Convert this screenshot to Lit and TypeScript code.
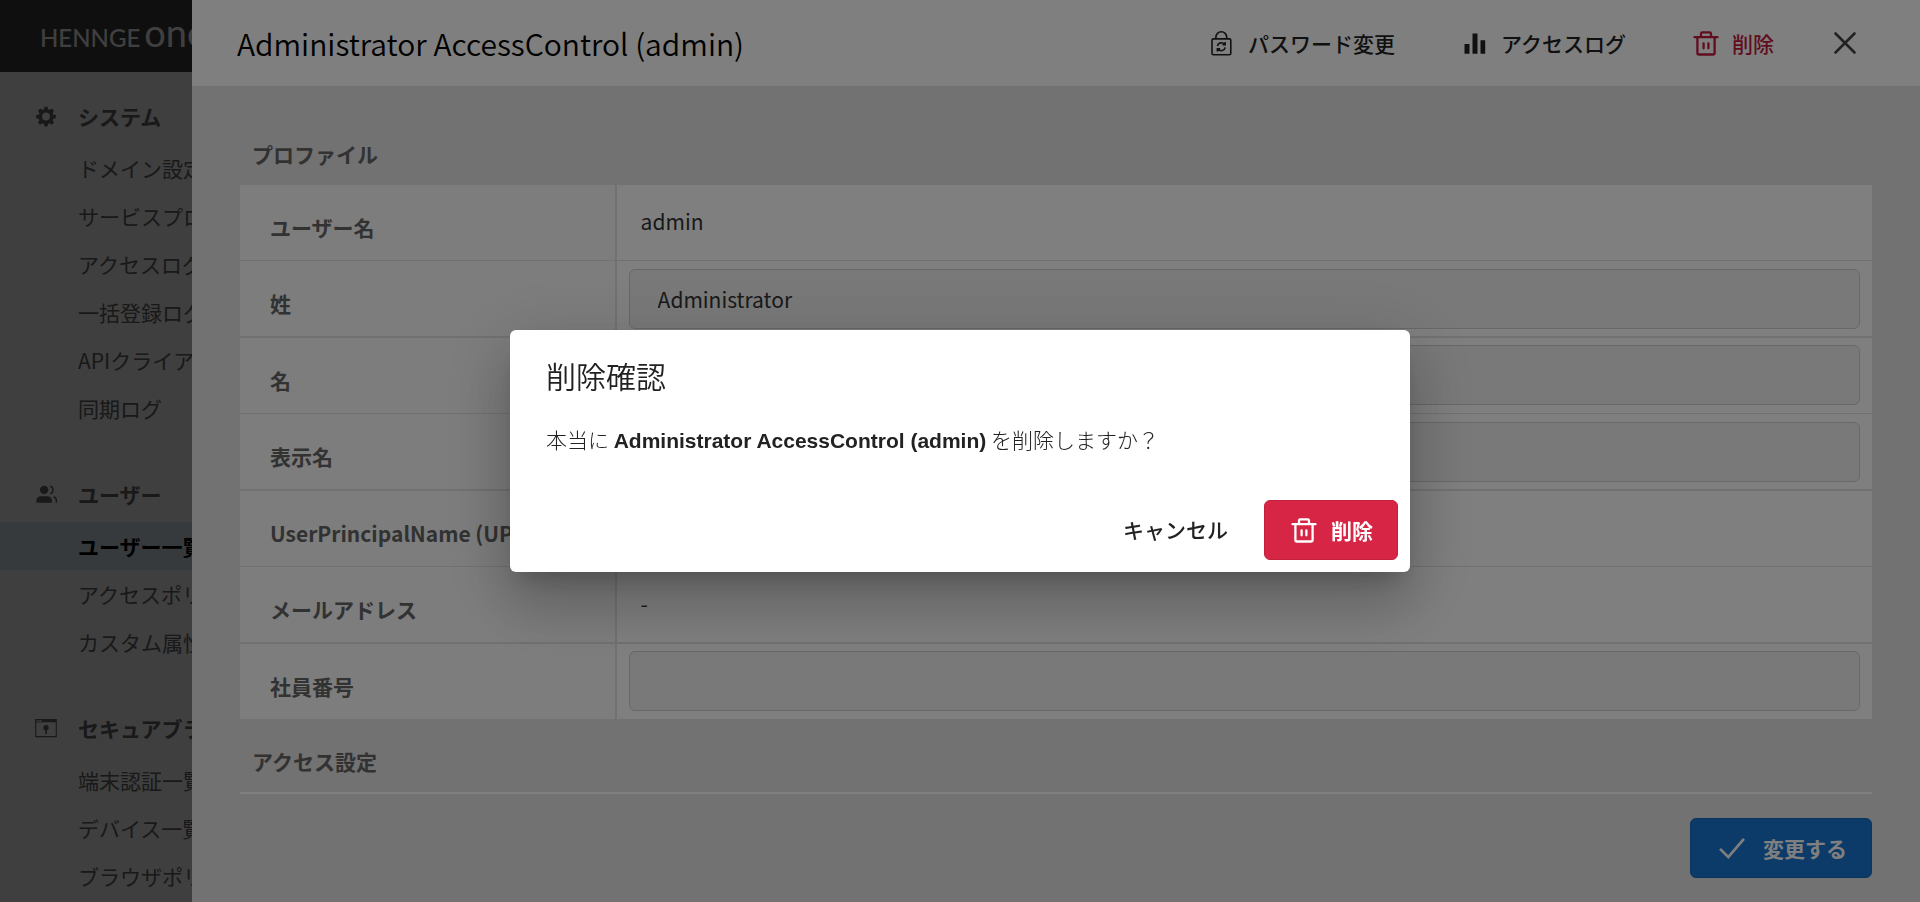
import { LitElement, html, css, svg, nothing } from "lit";
import { customElement, property } from "lit/decorators.js";

const glyphs: Record<string, unknown> = {
  gear: svg`<path fill="currentColor" fill-rule="evenodd" d="M10.3 2h3.4l.5 2.7 1.9.8 2.3-1.6 2.4 2.4-1.6 2.3.8 1.9 2.7.5v3.4l-2.7.5-.8 1.9 1.6 2.3-2.4 2.4-2.3-1.6-1.9.8-.5 2.7h-3.4l-.5-2.7-1.9-.8-2.3 1.6-2.4-2.4 1.6-2.3-.8-1.9-2.7-.5v-3.4l2.7-.5.8-1.9-1.6-2.3 2.4-2.4 2.3 1.6 1.9-.8zM12 8.200a4.300 4.300 0 1 0 0 8.600 4.300 4.300 0 0 0 0-8.600z"/>`,
  users: svg`<circle cx="10" cy="7.500" r="4.600" fill="currentColor"/><path fill="currentColor" d="M1.500 21.500v-2.200c0-3 2.500-4.800 5-4.800h7c2.600 0 5 1.800 5 4.800v2.200z"/><path fill="none" stroke="currentColor" stroke-width="1.600" d="M16.500 3.600c1.800.4 3.200 2 3.200 4s-1.400 3.600-3.200 4M20.500 15c1.600.6 2.800 2.200 2.800 4v2.500"/>`,
  browser: svg`<path fill="none" stroke="currentColor" stroke-width="1.200" d="M.8 2.800h22.400v18.600H.8z"/><path fill="currentColor" d="M7.500 2.500h15.700v3.300H7.500zM.8 5.200h7v.7h-7z"/><path stroke="currentColor" stroke-width="1" stroke-dasharray="1.200 1.200" d="M1.500 3.900h6"/><circle cx="12" cy="11.700" r="2.900" fill="currentColor"/><path fill="currentColor" d="M11.100 13h1.800v5.200l-.9.900-.9-.9z"/>`,
  lock: svg`<g fill="none" stroke="currentColor" stroke-width="1.600"><rect x="2" y="7.900" width="18.800" height="15.800" rx="1.400"/><path d="M5.900 7.700V6.200a5.400 5.400 0 0 1 10.800 0v1.500"/><path d="M7.400 15a4 4 0 0 1 7.100-1.700M15.200 16.400a4 4 0 0 1-7.100 1.700M15.200 10.900v2.700h-2.700M7.400 20.500v-2.700h2.700"/></g>`,
  bars: svg`<path fill="currentColor" d="M1.500 13h5v9.800h-5zM9.500 2.500h5v20.300h-5zM17.500 9.300h4.700v13.500h-4.700z"/>`,
  trash: svg`<g fill="none" stroke="currentColor" stroke-width="2.300"><path d="M.5 6.200h23" stroke-linecap="round"/><path d="M3.400 6.500v15.700a1.300 1.300 0 0 0 1.300 1.300h14.600a1.300 1.300 0 0 0 1.300-1.300V6.500"/><path d="M7 6V2.700A1.300 1.300 0 0 1 8.300 1.400h7.400A1.300 1.300 0 0 1 17 2.700V6"/><path d="M9.600 12.300v5M14.400 12.300v5" stroke-linecap="round"/></g>`,
  close: svg`<path fill="none" stroke="currentColor" stroke-width="2.600" stroke-linecap="round" d="M2.500 2.500l19 19M21.500 2.500l-19 19"/>`,
  check: svg`<path fill="none" stroke="currentColor" stroke-width="2.500" d="M1 12.800l7.600 7.600L23 3.600"/>`,
};

@customElement("ui-icon")
class UiIcon extends LitElement {
  static styles = css`
    :host { display: inline-flex; flex: none; width: 24px; height: 24px; }
    svg { width: 100%; height: 100%; display: block; overflow: visible; }
  `;
  @property() name = "";
  render() {
    return html`<svg viewBox="0 0 24 24" aria-hidden="true">${glyphs[this.name] ?? nothing}</svg>`;
  }
}

interface Group { icon: string; title: string; items: string[]; }

@customElement("side-nav")
class SideNav extends LitElement {
  static styles = css`
    :host { display: block; height: 100vh; overflow: hidden; background: #fcfcfc; color: #646464; }
    .brand { height: 72px; box-sizing: border-box; padding: 14px 0 0 40px; background: #3c3c3c; color: #fff;
      display: flex; align-items: baseline; gap: 4px; font-family: Lato, sans-serif; line-height: 36px; white-space: nowrap; }
    .word { font-size: 24px; font-weight: 500; }
    .one { font-size: 38px; }
    nav { padding-top: 18px; white-space: nowrap; }
    .group { margin-bottom: 36px; }
    h2 { margin: 0; height: 54px; box-sizing: border-box; padding: 0 0 2px 35px; display: flex; align-items: center; gap: 21px;
      font-size: 21px; line-height: 30px; font-weight: 700; }
    h2 ui-icon { width: 22px; height: 22px; }
    ul { list-style: none; margin: 0; padding: 0; }
    a { display: block; padding: 9px 0 9px 78px; font-size: 21px; line-height: 30px; color: inherit; text-decoration: none; }
    .active { background: #d9e9f5; color: #000; font-weight: 700; }
  `;
  groups: Group[] = [
    { icon: "gear", title: "システム", items: ["ドメイン設定", "サービスプロバイダ", "アクセスログ", "一括登録ログ", "APIクライアント", "同期ログ"] },
    { icon: "users", title: "ユーザー", items: ["ユーザー一覧", "アクセスポリシー", "カスタム属性"] },
    { icon: "browser", title: "セキュアブラウザ", items: ["端末認証一覧", "デバイス一覧", "ブラウザポリシー"] },
  ];
  render() {
    return html`
      <div class="brand"><span class="word">HENNGE</span><span class="one">one</span></div>
      <nav>
        ${this.groups.map((g) => html`
          <div class="group">
            <h2><ui-icon name=${g.icon}></ui-icon>${g.title}</h2>
            <ul>${g.items.map((i) => html`<li><a href="#" class=${i === "ユーザー一覧" ? "active" : ""}>${i}</a></li>`)}</ul>
          </div>`)}
      </nav>`;
  }
}

interface Field { label: string; value: string; edit?: boolean; }

@customElement("user-drawer")
class UserDrawer extends LitElement {
  static styles = css`
    :host { display: flex; flex-direction: column; height: 100vh; background: #e5e5e5; color: #333; }
    header { flex: none; height: 86px; box-sizing: border-box; padding: 0 63px 0 45px; background: #fff;
      display: flex; align-items: center; gap: 59px; }
    h1 { margin: 0; flex: 1; font-size: 30px; line-height: 44px; font-weight: 350; color: #000; white-space: nowrap; }
    button { font: inherit; border: 0; background: none; padding: 0; display: flex; align-items: center; cursor: pointer; }
    .actions { display: flex; align-items: center; gap: 68px; }
    .action { gap: 14px; font-size: 21px; line-height: 30px; font-weight: 500; color: #222; }
    .danger { color: #c31a3c; }
    .close { color: #444; }
    main { flex: 1; min-height: 0; overflow: hidden; padding: 26px 48px 0; }
    h2 { margin: 0; padding: 27px 12px 16px; font-size: 21px; line-height: 30px; font-weight: 700; color: #646464; }
    .panel { background: #fff; min-height: 75px; }
    .row { display: grid; grid-template-columns: 3fr 10fr; min-height: 75px; border-bottom: 1px solid #e3e3e3; }
    .row:nth-child(even) { border-bottom-width: 2px; }
    .row:last-child { border-bottom: 0; }
    .label { background: #fafafa; border-right: 2px solid #e3e3e3; padding: 27px 30px 18px; font-size: 21px; line-height: 30px;
      font-weight: 700; color: #646464; white-space: nowrap; }
    .value { padding: 21px 24px; font-size: 21px; line-height: 30px; }
    .edit { padding: 7px 12px 8px; }
    .row:nth-child(even) .edit { padding: 8px 12px 7px; }
    input { display: block; width: 100%; height: 60px; box-sizing: border-box; padding: 0 28px; border: 1px solid #d0d0d0;
      border-radius: 6px; background: #f3f3f3; font: inherit; color: inherit; }
    footer { flex: none; display: flex; justify-content: flex-end; padding: 24px 48px; }
    .save { height: 60px; padding: 0 24px 0 27px; gap: 17px; border-radius: 6px; background: #1976d2; color: #fff;
      font-size: 21px; line-height: 30px; font-weight: 700; border: 1px solid #176bc0; }
    .save ui-icon { width: 28px; height: 26px; }
  `;
  fields: Field[] = [
    { label: "ユーザー名", value: "admin" },
    { label: "姓", value: "Administrator", edit: true },
    { label: "名", value: "", edit: true },
    { label: "表示名", value: "", edit: true },
    { label: "UserPrincipalName (UPN)", value: "" },
    { label: "メールアドレス", value: "-" },
    { label: "社員番号", value: "", edit: true },
  ];
  render() {
    return html`
      <header>
        <h1>Administrator AccessControl (admin)</h1>
        <div class="actions">
          <button class="action"><ui-icon name="lock"></ui-icon>パスワード変更</button>
          <button class="action"><ui-icon name="bars"></ui-icon>アクセスログ</button>
          <button class="action danger"><ui-icon name="trash"></ui-icon>削除</button>
        </div>
        <button class="close" aria-label="閉じる"><ui-icon name="close"></ui-icon></button>
      </header>
      <main>
        <h2>プロファイル</h2>
        <div class="panel">
          ${this.fields.map((f, i) => html`
            <div class="row">
              ${f.edit
                ? html`<label class="label" for="f${i}">${f.label}</label>
                    <div class="value edit"><input id="f${i}" type="text" .value=${f.value} /></div>`
                : html`<div class="label">${f.label}</div><div class="value">${f.value}</div>`}
            </div>`)}
        </div>
        <h2>アクセス設定</h2>
        <div class="panel"></div>
      </main>
      <footer><button class="save"><ui-icon name="check"></ui-icon>変更する</button></footer>`;
  }
}

@customElement("confirm-dialog")
class ConfirmDialog extends LitElement {
  static styles = css`
    :host { display: block; width: 900px; max-width: 90vw; background: #fff; border-radius: 6px; color: #222;
      box-shadow: 0 16px 22px -10px rgba(0, 0, 0, 0.2), 0 36px 57px 4px rgba(0, 0, 0, 0.14), 0 14px 69px 12px rgba(0, 0, 0, 0.12); }
    h2 { margin: 0; padding: 22px 36px 24px; font-size: 30px; line-height: 46px; font-weight: 350; }
    p { margin: 0; padding: 0 36px 30px; font-size: 21px; line-height: 34px; font-weight: 300; }
    strong { font-family: "Liberation Sans", Arial, sans-serif; font-weight: 700; }
    .actions { display: flex; justify-content: flex-end; align-items: center; gap: 12px; padding: 12px; }
    button { height: 60px; border: 0; border-radius: 6px; background: none; color: inherit; font: inherit; font-size: 21px;
      line-height: 30px; font-weight: 500; padding: 0 24px 2px; display: flex; align-items: center; gap: 15px; cursor: pointer; }
    .delete { background: #d72645; color: #fff; border: 1px solid #c2203e; font-weight: 700; padding: 0 24px 0 27px; }
  `;
  render() {
    return html`
      <h2>削除確認</h2>
      <p>本当に <strong>Administrator AccessControl (admin)</strong> を削除しますか？</p>
      <div class="actions">
        <button>キャンセル</button>
        <button class="delete"><ui-icon name="trash"></ui-icon>削除</button>
      </div>`;
  }
}

@customElement("app-root")
class AppRoot extends LitElement {
  static styles = css`
    :host { display: block; height: 100vh; overflow: hidden; font-family: "Noto Sans CJK JP", "Noto Sans", sans-serif; }
    .scrim { position: fixed; inset: 0; background: rgba(0, 0, 0, 0.5); }
    .drawer { position: fixed; inset: 0 0 0 192px; }
    .modal { display: flex; align-items: center; justify-content: center; }
  `;
  render() {
    return html`
      <side-nav></side-nav>
      <div class="scrim"></div>
      <user-drawer class="drawer"></user-drawer>
      <div class="scrim modal"><confirm-dialog role="dialog" aria-modal="true" aria-label="削除確認"></confirm-dialog></div>`;
  }
}
